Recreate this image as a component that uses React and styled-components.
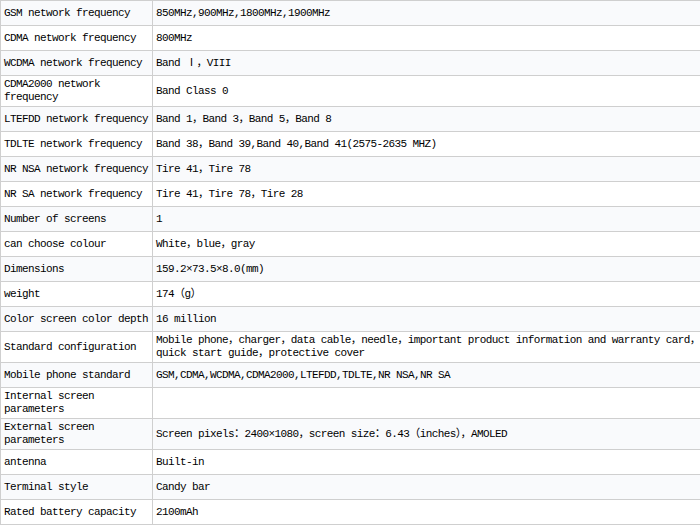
import React from "react";
import styled, { createGlobalStyle } from "styled-components";

const GlobalStyle = createGlobalStyle`
  body {
    margin: 0;
    background: #fff;
    overflow-x: hidden;
  }
`;

const Table = styled.table`
  width: 708px;
  border-collapse: collapse;
  table-layout: fixed;
  font-family: "Liberation Mono", "Noto Sans CJK SC", monospace;
  font-size: 11px;
  letter-spacing: -0.6px;
  color: #000;
`;

const Row = styled.tr`
  background: ${(p) => (p.$striped ? "#f9fafc" : "#fff")};
`;

const Cell = styled.td`
  height: ${(p) => (p.$tall ? "30px" : "24px")};
  padding: ${(p) => (p.$value ? "0 0 0 3px" : "0 2px 0 3px")};
  line-height: 13px;
  vertical-align: middle;
  border-top: 1px solid #cfcfcf;
  border-bottom: 1px solid #cfcfcf;
  border-left: 1px solid #cfcfcf;
  word-wrap: break-word;
  overflow: hidden;
`;

const rows = [
  ["GSM network frequency", "850MHz,900MHz,1800MHz,1900MHz"],
  ["CDMA network frequency", "800MHz"],
  ["WCDMA network frequency", "Band Ⅰ，VIII"],
  ["CDMA2000 network frequency", "Band Class 0", true],
  ["LTEFDD network frequency", "Band 1，Band 3，Band 5，Band 8"],
  ["TDLTE network frequency", "Band 38，Band 39,Band 40,Band 41(2575-2635 MHZ)"],
  ["NR NSA network frequency", "Tire 41，Tire 78"],
  ["NR SA network frequency", "Tire 41，Tire 78，Tire 28"],
  ["Number of screens", "1"],
  ["can choose colour", "White，blue，gray"],
  ["Dimensions", "159.2×73.5×8.0(mm)"],
  ["weight", "174（g）"],
  ["Color screen color depth", "16 million"],
  [
    "Standard configuration",
    "Mobile phone，charger，data cable，needle，important product information and warranty card，quick start guide，protective cover",
    true,
  ],
  ["Mobile phone standard", "GSM,CDMA,WCDMA,CDMA2000,LTEFDD,TDLTE,NR NSA,NR SA"],
  ["Internal screen parameters", "", true],
  ["External screen parameters", "Screen pixels：2400×1080，screen size：6.43（inches），AMOLED", true],
  ["antenna", "Built-in"],
  ["Terminal style", "Candy bar"],
  ["Rated battery capacity", "2100mAh"],
];

function App() {
  return (
    <>
      <GlobalStyle />
      <Table>
        <colgroup>
          <col style={{ width: 152 }} />
          <col />
        </colgroup>
        <tbody>
          {rows.map(([label, value, tall], i) => (
            <Row key={label} $striped={i % 2 === 0}>
              <Cell $tall={tall}>{label}</Cell>
              <Cell $tall={tall} $value>
                {value}
              </Cell>
            </Row>
          ))}
        </tbody>
      </Table>
    </>
  );
}

export default App;
